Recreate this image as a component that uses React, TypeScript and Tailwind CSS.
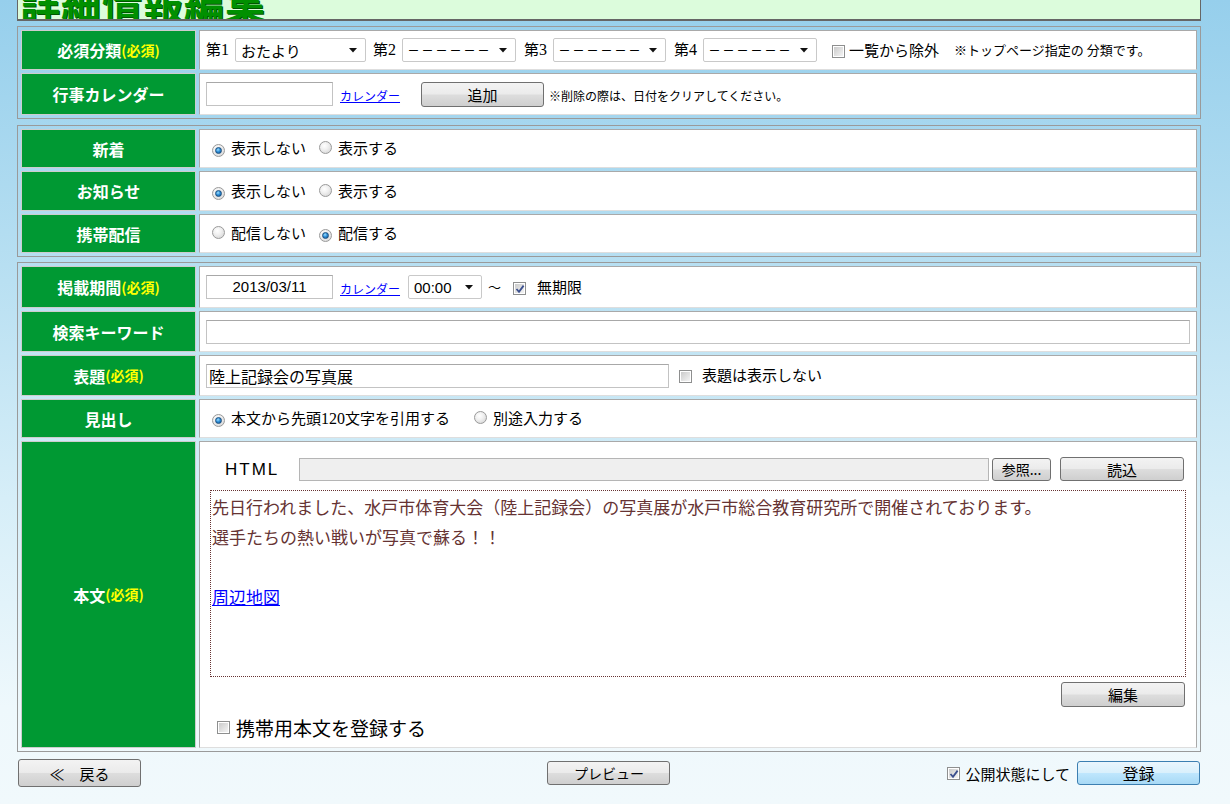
import type { ReactNode } from "react";

const jp = "font-['Noto_Sans_CJK_JP',sans-serif]";
const grayBtn =
  "rounded-[3px] border border-[#707070] bg-[linear-gradient(#f3f3f3_0%,#ebebeb_48%,#dddddd_52%,#cfcfcf_100%)] flex items-center justify-center text-black leading-none";

function Radio({ checked }: { checked?: boolean }) {
  return (
    <span className="relative inline-flex h-[13px] w-[13px] shrink-0 items-center justify-center rounded-full border border-[#9a9a9a] bg-[radial-gradient(circle_at_40%_35%,#ffffff_0%,#f0f0f0_40%,#cfcfcf_100%)]">
      {checked && (
        <span className="h-[7px] w-[7px] rounded-full border border-[#1c4f7e] bg-[radial-gradient(circle_at_40%_35%,#9fe0ff_0%,#2f8fd8_45%,#0b4f8f_100%)]" />
      )}
    </span>
  );
}

function Check({ checked }: { checked?: boolean }) {
  return (
    <span className="relative inline-flex h-[13px] w-[13px] shrink-0 items-center justify-center border border-[#8e8f8f] bg-white p-[1px]">
      <span className="h-full w-full bg-[linear-gradient(135deg,#cbcbcb_0%,#f4f4f4_100%)]" />
      {checked && (
        <svg className="absolute left-[1px] top-[1px]" width="10" height="10" viewBox="0 0 10 10">
          <path d="M1.5 5 L4 7.8 L8.6 1.6" fill="none" stroke="#3b4f8e" strokeWidth="1.8" />
        </svg>
      )}
    </span>
  );
}

function Select({ value, width, dash }: { value: string; width: string; dash?: boolean }) {
  return (
    <span
      className={`flex h-[24px] ${width} shrink-0 items-center justify-between rounded-[2px] border border-[#c9c9c9] bg-white pl-[5px] pr-[8px] leading-none ${
        dash ? "text-[11px] tracking-[3px]" : "text-[15px]"
      }`}
    >
      <span>{value}</span>
      <svg width="8" height="5" viewBox="0 0 8 5">
        <path d="M0 0 H8 L4 4.5 Z" fill="#111" />
      </svg>
    </span>
  );
}

function Box({ value, className }: { value?: string; className: string }) {
  return (
    <span
      className={`flex h-[24px] shrink-0 items-center border border-[#c3c3c3] border-t-[#a8a8a8] bg-white ${className}`}
    >
      {value}
    </span>
  );
}

function Link({ children, className = "" }: { children: ReactNode; className?: string }) {
  return <a className={`text-[12px] leading-none text-[#0000ff] underline ${className}`}>{children}</a>;
}

function Req() {
  return <span className="text-[14px] text-[#ffff00]">(必須)</span>;
}

function Row({ label, h, children, col }: { label: ReactNode; h: string; children: ReactNode; col?: boolean }) {
  return (
    <div className={`flex gap-[3px] ${h}`}>
      <div className="flex w-[175px] shrink-0 items-center justify-center border border-[#cdcdcd] bg-[#009933] text-[16px] font-bold text-white">
        {label}
      </div>
      <div
        className={`flex flex-1 border border-[#a9a9a9] border-b-[#dedede] bg-white text-[15px] text-black ${
          col ? "flex-col" : "items-center"
        }`}
      >
        {children}
      </div>
    </div>
  );
}

function Frame({ children, className = "" }: { children: ReactNode; className?: string }) {
  return <div className={`flex flex-col gap-[3px] border border-[#9a9a9a] p-[3px] ${className}`}>{children}</div>;
}

function Num({ children }: { children: ReactNode }) {
  return <span className="font-['Liberation_Serif',serif] text-[16px]">{children}</span>;
}

const blank = "ーーーーーー";

export default function App() {
  return (
    <div
      className={`h-[804px] w-[1230px] overflow-hidden bg-[linear-gradient(#96cfec_0%,#b9e0f2_35%,#d6eef8_62%,#eef8fc_88%,#f1f9fc_100%)] ${jp}`}
    >
      <div className="ml-[17px] w-[1184px]">
        <div className="-mt-[24px] flex h-[45px] items-end overflow-hidden border-x border-b-2 border-[#666666] bg-[#dcfcdc] pl-[2px]">
          <h1 className="mb-[-3px] text-[40px] font-bold leading-none tracking-[1px] text-[#009000] [text-shadow:1px_1px_0_#005500]">
            詳細情報編集
          </h1>
        </div>

        <Frame className="mt-[5px]">
          <Row
            h="h-[40px]"
            label={
              <>
                必須分類
                <Req />
              </>
            }
          >
            <span className="ml-[6px]">
              第<Num>1</Num>
            </span>
            <span className="ml-[6px]">
              <Select value="おたより" width="w-[131px]" />
            </span>
            <span className="ml-[7px]">
              第<Num>2</Num>
            </span>
            <span className="ml-[6px]">
              <Select value={blank} dash width="w-[114px]" />
            </span>
            <span className="ml-[8px]">
              第<Num>3</Num>
            </span>
            <span className="ml-[6px]">
              <Select value={blank} dash width="w-[113px]" />
            </span>
            <span className="ml-[8px]">
              第<Num>4</Num>
            </span>
            <span className="ml-[6px]">
              <Select value={blank} dash width="w-[114px]" />
            </span>
            <span className="ml-[15px]">
              <Check />
            </span>
            <span className="ml-[4px]">一覧から除外</span>
            <span className="ml-[15px] text-[13px]">※トップページ指定の 分類です。</span>
          </Row>
          <Row h="h-[42px]" label="行事カレンダー">
            <Box className="ml-[6px] w-[127px]" />
            <Link className="ml-[7px] mt-[4px]">カレンダー</Link>
            <button className={`${grayBtn} ml-[21px] h-[25px] w-[123px] text-[15px]`}>追加</button>
            <span className="ml-[5px] mt-[3px] text-[12px]">※削除の際は、日付をクリアしてください。</span>
          </Row>
        </Frame>

        <Frame className="mt-[6px]">
          <Row h="h-[39px]" label="新着">
            <span className="ml-[12px]"><Radio checked /></span>
            <span className="ml-[6px]">表示しない</span>
            <span className="ml-[13px]"><Radio /></span>
            <span className="ml-[6px]">表示する</span>
          </Row>
          <Row h="h-[40px]" label="お知らせ">
            <span className="ml-[12px]"><Radio checked /></span>
            <span className="ml-[6px]">表示しない</span>
            <span className="ml-[13px]"><Radio /></span>
            <span className="ml-[6px]">表示する</span>
          </Row>
          <Row h="h-[39px]" label="携帯配信">
            <span className="ml-[12px]"><Radio /></span>
            <span className="ml-[6px]">配信しない</span>
            <span className="ml-[13px]"><Radio checked /></span>
            <span className="ml-[6px]">配信する</span>
          </Row>
        </Frame>

        <Frame className="mt-[5px]">
          <Row
            h="h-[42px]"
            label={
              <>
                掲載期間
                <Req />
              </>
            }
          >
            <Box
              value="2013/03/11"
              className="ml-[6px] w-[127px] justify-center font-['Liberation_Sans',sans-serif] text-[15px]"
            />
            <Link className="ml-[7px] mt-[4px]">カレンダー</Link>
            <span className="ml-[8px] font-['Liberation_Sans',sans-serif]">
              <Select value="00:00" width="w-[74px]" />
            </span>
            <span className="ml-[6px] text-[13px]">〜</span>
            <span className="ml-[12px]"><Check checked /></span>
            <span className="ml-[11px]">無期限</span>
          </Row>
          <Row h="h-[41px]" label="検索キーワード">
            <Box className="ml-[6px] w-[984px]" />
          </Row>
          <Row
            h="h-[41px]"
            label={
              <>
                表題
                <Req />
              </>
            }
          >
            <Box value="陸上記録会の写真展" className="ml-[6px] w-[463px] pl-[2px] text-[16px]" />
            <span className="ml-[10px]"><Check /></span>
            <span className="ml-[10px]">表題は表示しない</span>
          </Row>
          <Row h="h-[39px]" label="見出し">
            <span className="ml-[12px]"><Radio checked /></span>
            <span className="ml-[6px]">
              本文から先頭<Num>120</Num>文字を引用する
            </span>
            <span className="ml-[24px]"><Radio /></span>
            <span className="ml-[6px]">別途入力する</span>
          </Row>
          <Row
            h="h-[307px]"
            col
            label={
              <>
                本文
                <Req />
              </>
            }
          >
            <div className="flex items-center pl-[10px] pr-[10px] pt-[15px]">
              <span className="ml-[15px] w-[74px] font-['Liberation_Sans',sans-serif] text-[17px] font-light leading-none tracking-[2px]">
                HTML
              </span>
              <span className="h-[23px] w-[690px] border border-[#b5b5b5] bg-[#efefef]" />
              <button className={`${grayBtn} ml-[3px] h-[23px] w-[59px] text-[14px]`}>参照...</button>
              <button className={`${grayBtn} ml-[9px] h-[24px] w-[124px] text-[15px]`}>読込</button>
            </div>
            <div className="mx-[10px] mt-[9px] h-[187px] border border-dotted border-[#663333] pl-[1px] pt-[1px] text-[17px] leading-[30px] text-[#663333]">
              <p>先日行われました、水戸市体育大会（陸上記録会）の写真展が水戸市総合教育研究所で開催されております。</p>
              <p>選手たちの熱い戦いが写真で蘇る！！</p>
              <p>&nbsp;</p>
              <p>
                <a className="text-[#0000ff] underline">周辺地図</a>
              </p>
            </div>
            <div className="flex justify-end pr-[11px] pt-[5px]">
              <button className={`${grayBtn} h-[25px] w-[124px] text-[15px]`}>編集</button>
            </div>
            <div className="mt-[11px] flex items-center pl-[17px]">
              <Check />
              <span className="ml-[6px] text-[19px] leading-none">携帯用本文を登録する</span>
            </div>
          </Row>
        </Frame>

        <div className="mt-[7px] grid grid-cols-3 items-start">
          <div>
            <button className={`${grayBtn} ml-[1px] h-[28px] w-[123px] text-[15px]`}>≪　戻る</button>
          </div>
          <div className="flex justify-center pt-[2px]">
            <button className={`${grayBtn} h-[24px] w-[123px] text-[14px]`}>プレビュー</button>
          </div>
          <div className="flex items-center justify-end pr-[1px] pt-[2px]">
            <Check checked />
            <span className="ml-[5px] text-[15px] leading-none">公開状態にして</span>
            <button className="ml-[7px] flex h-[24px] w-[123px] items-center justify-center rounded-[3px] border border-[#3c7fb1] bg-[linear-gradient(#eaf6fd_0%,#d9f0fc_48%,#bee6fd_52%,#a7d9f5_100%)] text-[16px] leading-none text-black">
              登録
            </button>
          </div>
        </div>
      </div>
    </div>
  );
}
